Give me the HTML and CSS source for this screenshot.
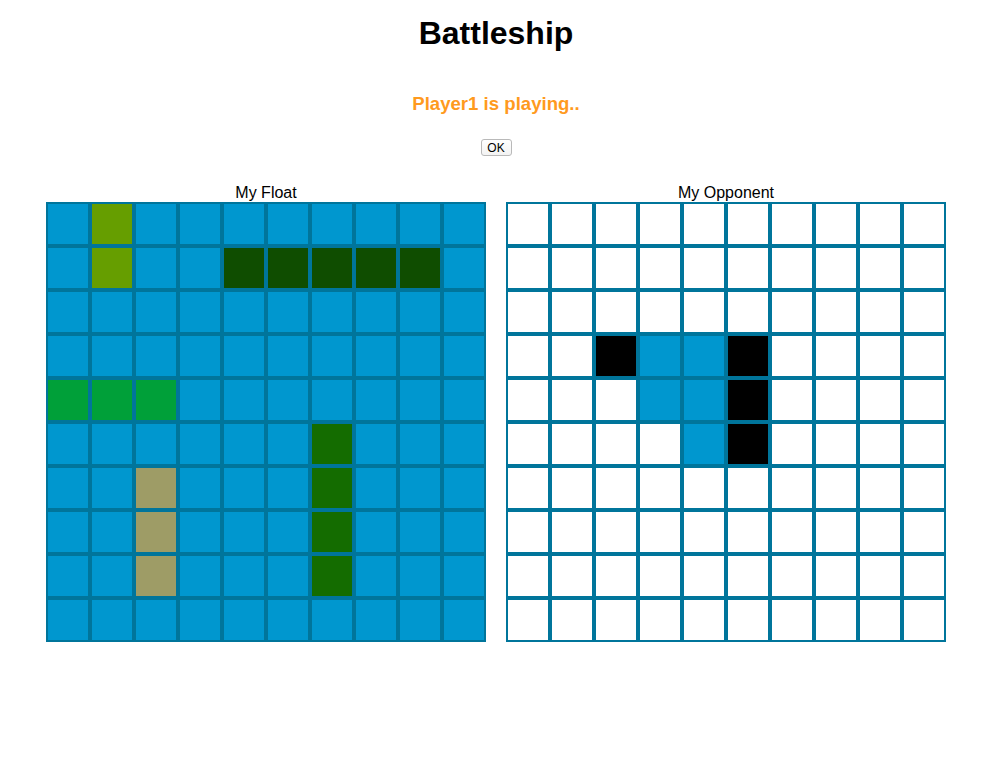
FILE: index.html
```html
<!DOCTYPE html>
<html>
<head>
<meta charset="utf-8">
<title>Battleship</title>
<link rel="stylesheet" href="styles.css">
</head>
<body>
<h1 class="title">Battleship</h1>
<h2 class="status">Player1 is playing..</h2>
<div class="actions"><button class="ok">OK</button></div>
<div class="boards">
  <div class="board">
    <div class="label">My Float</div>
    <div class="grid mine">
      <div class="c"></div><div class="c s1"></div><div class="c"></div><div class="c"></div><div class="c"></div><div class="c"></div><div class="c"></div><div class="c"></div><div class="c"></div><div class="c"></div>
      <div class="c"></div><div class="c s1"></div><div class="c"></div><div class="c"></div><div class="c s2"></div><div class="c s2"></div><div class="c s2"></div><div class="c s2"></div><div class="c s2"></div><div class="c"></div>
      <div class="c"></div><div class="c"></div><div class="c"></div><div class="c"></div><div class="c"></div><div class="c"></div><div class="c"></div><div class="c"></div><div class="c"></div><div class="c"></div>
      <div class="c"></div><div class="c"></div><div class="c"></div><div class="c"></div><div class="c"></div><div class="c"></div><div class="c"></div><div class="c"></div><div class="c"></div><div class="c"></div>
      <div class="c s3"></div><div class="c s3"></div><div class="c s3"></div><div class="c"></div><div class="c"></div><div class="c"></div><div class="c"></div><div class="c"></div><div class="c"></div><div class="c"></div>
      <div class="c"></div><div class="c"></div><div class="c"></div><div class="c"></div><div class="c"></div><div class="c"></div><div class="c s4"></div><div class="c"></div><div class="c"></div><div class="c"></div>
      <div class="c"></div><div class="c"></div><div class="c s5"></div><div class="c"></div><div class="c"></div><div class="c"></div><div class="c s4"></div><div class="c"></div><div class="c"></div><div class="c"></div>
      <div class="c"></div><div class="c"></div><div class="c s5"></div><div class="c"></div><div class="c"></div><div class="c"></div><div class="c s4"></div><div class="c"></div><div class="c"></div><div class="c"></div>
      <div class="c"></div><div class="c"></div><div class="c s5"></div><div class="c"></div><div class="c"></div><div class="c"></div><div class="c s4"></div><div class="c"></div><div class="c"></div><div class="c"></div>
      <div class="c"></div><div class="c"></div><div class="c"></div><div class="c"></div><div class="c"></div><div class="c"></div><div class="c"></div><div class="c"></div><div class="c"></div><div class="c"></div>
    </div>
  </div>
  <div class="board">
    <div class="label">My Opponent</div>
    <div class="grid theirs">
      <div class="c"></div><div class="c"></div><div class="c"></div><div class="c"></div><div class="c"></div><div class="c"></div><div class="c"></div><div class="c"></div><div class="c"></div><div class="c"></div>
      <div class="c"></div><div class="c"></div><div class="c"></div><div class="c"></div><div class="c"></div><div class="c"></div><div class="c"></div><div class="c"></div><div class="c"></div><div class="c"></div>
      <div class="c"></div><div class="c"></div><div class="c"></div><div class="c"></div><div class="c"></div><div class="c"></div><div class="c"></div><div class="c"></div><div class="c"></div><div class="c"></div>
      <div class="c"></div><div class="c"></div><div class="c hit"></div><div class="c miss"></div><div class="c miss"></div><div class="c hit"></div><div class="c"></div><div class="c"></div><div class="c"></div><div class="c"></div>
      <div class="c"></div><div class="c"></div><div class="c"></div><div class="c miss"></div><div class="c miss"></div><div class="c hit"></div><div class="c"></div><div class="c"></div><div class="c"></div><div class="c"></div>
      <div class="c"></div><div class="c"></div><div class="c"></div><div class="c"></div><div class="c miss"></div><div class="c hit"></div><div class="c"></div><div class="c"></div><div class="c"></div><div class="c"></div>
      <div class="c"></div><div class="c"></div><div class="c"></div><div class="c"></div><div class="c"></div><div class="c"></div><div class="c"></div><div class="c"></div><div class="c"></div><div class="c"></div>
      <div class="c"></div><div class="c"></div><div class="c"></div><div class="c"></div><div class="c"></div><div class="c"></div><div class="c"></div><div class="c"></div><div class="c"></div><div class="c"></div>
      <div class="c"></div><div class="c"></div><div class="c"></div><div class="c"></div><div class="c"></div><div class="c"></div><div class="c"></div><div class="c"></div><div class="c"></div><div class="c"></div>
      <div class="c"></div><div class="c"></div><div class="c"></div><div class="c"></div><div class="c"></div><div class="c"></div><div class="c"></div><div class="c"></div><div class="c"></div><div class="c"></div>
    </div>
  </div>
</div>
</body>
</html>
```

FILE: styles.css
```css
html, body {
  margin: 0;
  padding: 0;
  background: #ffffff;
}
body {
  font-family: "Liberation Sans", Arial, Helvetica, sans-serif;
  color: #000000;
  width: 992px;
}
.title {
  margin: 15px 0 0 0;
  font-size: 32px;
  line-height: 37px;
  font-weight: bold;
  text-align: center;
}
.status {
  margin: 41px 0 0 0;
  font-size: 18.6px;
  line-height: 21px;
  font-weight: bold;
  color: #ff9a1e;
  text-align: center;
}
.actions {
  margin-top: 25px;
  display: flex;
  justify-content: center;
}
.ok {
  font-family: "Liberation Sans", Arial, sans-serif;
  font-size: 12px;
  line-height: 14px;
  height: 17px;
  width: 31px;
  padding: 0;
  margin: 0;
  border: 1px solid #b9b9b9;
  border-radius: 3px;
  background: linear-gradient(#ffffff, #f3f3f3);
  color: #000;
}
.boards {
  display: flex;
  gap: 20px;
  padding-left: 46px;
  margin-top: 27px;
}
.label {
  text-align: center;
  font-size: 16px;
  line-height: 19px;
}
.grid {
  display: grid;
  grid-template-columns: repeat(10, 44px);
  grid-auto-rows: 44px;
}
.c {
  border: 2px solid #00759b;
  background: #ffffff;
}
.mine .c { background: #0097cf; }
.mine .c.s1 { background: #669e00; }
.mine .c.s2 { background: #0f4d00; }
.mine .c.s3 { background: #00a039; }
.mine .c.s4 { background: #146c00; }
.mine .c.s5 { background: #9e9c66; }
.theirs .c.hit { background: #000000; }
.theirs .c.miss { background: #0097cf; }
```
